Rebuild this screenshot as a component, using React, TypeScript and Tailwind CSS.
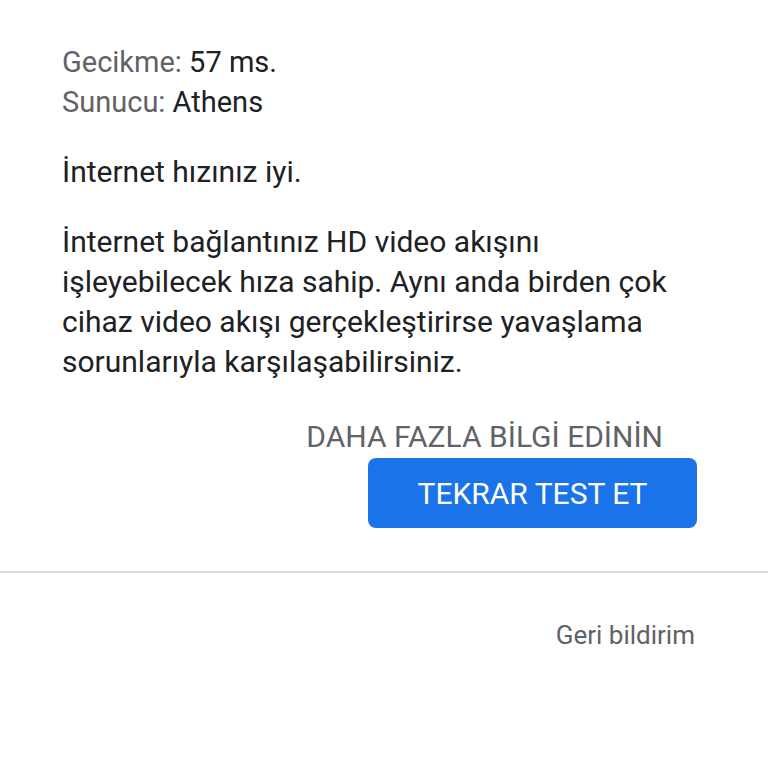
import React from 'react';

export default function App() {
  return (
    <div className="w-[768px] h-[768px] bg-white font-['Roboto','Noto_Sans',sans-serif] text-[#202124]">
      <div className="px-[62px] pt-[42px]">
        <div className="text-[29px] leading-[40px]">
          <div>
            <span className="text-[#5f6368]">Gecikme:</span> 57 ms.
          </div>
          <div>
            <span className="text-[#5f6368]">Sunucu:</span> Athens
          </div>
        </div>
        <p className="mt-[30px] text-[30px] leading-[40px]">İnternet hızınız iyi.</p>
        <p className="mt-[30px] text-[30px] leading-[40px] w-[605px]">
          İnternet bağlantınız HD video akışını işleyebilecek hıza sahip. Aynı anda birden çok cihaz video akışı gerçekleştirirse yavaşlama sorunlarıyla karşılaşabilirsiniz.
        </p>
      </div>
      <div className="flex justify-end pr-[105px] mt-[35px]">
        <button className="text-[30px] leading-[40px] text-[#5f6368]">DAHA FAZLA BİLGİ EDİNİN</button>
      </div>
      <div className="flex justify-end pr-[71px] mt-[1px]">
        <button className="w-[329px] h-[70px] rounded-[8px] bg-[#1a73e8] text-white text-[30px]">TEKRAR TEST ET</button>
      </div>
      <div className="mt-[43px] h-[2px] bg-[#dadce0]" />
      <div className="flex justify-end pr-[73px] mt-[47px]">
        <span className="text-[26px] leading-[30px] text-[#5f6368]">Geri bildirim</span>
      </div>
    </div>
  );
}
